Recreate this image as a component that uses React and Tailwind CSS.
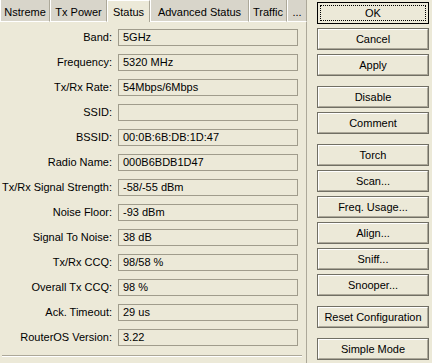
const tabs = [
  { name: 'Nstreme', w: 'w-[50px]' },
  { name: 'Tx Power', w: 'w-[57px]' },
  { name: 'Status', w: 'w-[43px]', active: true },
  { name: 'Advanced Status', w: 'w-[99px]' },
  { name: 'Traffic', w: 'w-[38px]' },
  { name: '...', w: 'w-[20px]' },
]

const rows = [
  ['Band:', '5GHz'],
  ['Frequency:', '5320 MHz'],
  ['Tx/Rx Rate:', '54Mbps/6Mbps'],
  ['SSID:', ''],
  ['BSSID:', '00:0B:6B:DB:1D:47'],
  ['Radio Name:', '000B6BDB1D47'],
  ['Tx/Rx Signal Strength:', '-58/-55 dBm'],
  ['Noise Floor:', '-93 dBm'],
  ['Signal To Noise:', '38 dB'],
  ['Tx/Rx CCQ:', '98/58 %'],
  ['Overall Tx CCQ:', '98 %'],
  ['Ack. Timeout:', '29 us'],
  ['RouterOS Version:', '3.22'],
]

const groups = [
  ['OK', 'Cancel', 'Apply'],
  ['Disable', 'Comment'],
  ['Torch', 'Scan...', 'Freq. Usage...', 'Align...', 'Sniff...', 'Snooper...'],
  ['Reset Configuration'],
  ['Simple Mode'],
]

function Button({ label, focused }) {
  if (focused) {
    return (
      <div className="h-[22px] w-[112px] border border-black bg-[#ece9d8] p-[2px]">
        <div className="flex h-full w-full items-center justify-center border border-dotted border-black text-black">
          {label}
        </div>
      </div>
    )
  }
  return (
    <div className="h-[22px] w-[112px] border border-[#716f64] bg-[#ece9d8]">
      <div className="flex h-full w-full items-center justify-center border-l border-t border-l-white border-t-white border-r border-b border-r-[#aca899] border-b-[#aca899] text-black">
        {label}
      </div>
    </div>
  )
}

export default function App() {
  return (
    <div
      className="flex h-[363px] w-[432px] bg-[#ece9d8] text-[11px] text-black overflow-hidden"
      style={{ fontFamily: '"Liberation Sans", Arial, sans-serif' }}
    >
      <div className="flex w-[307px] flex-col">
        <div className="flex h-[22px] items-end bg-[#ece9d8]">
          {tabs.map((t) =>
            t.active ? (
              <div
                key={t.name}
                className={`${t.w} flex h-[22px] items-start justify-center border-l border-t border-l-white border-t-white border-r border-r-[#aca899] bg-[#ece9d8] pt-[3px]`}
              >
                {t.name}
              </div>
            ) : (
              <div
                key={t.name}
                className={`${t.w} flex h-[22px] items-center justify-center border-l border-l-white border-r border-r-[#aca899] border-b border-b-white bg-[#d8d5ca] pt-[3px]`}
              >
                {t.name}
              </div>
            )
          )}
        </div>
        <div className="flex flex-1 flex-col border-r border-r-[#aca899] pt-[7px]">
          <div className="flex flex-col gap-[8px]">
            {rows.map(([label, value]) => (
              <div key={label} className="flex h-[17px] items-center">
                <div className="w-[113px] pr-[1px] text-right">{label}</div>
                <div className="ml-[5px] flex h-[17px] w-[180px] items-center border border-[#a09c8c] px-[4px]">
                  {value}
                </div>
              </div>
            ))}
          </div>
          <div className="mt-auto mb-[6px] ml-[2px] mr-[4px] h-[2px] border-t border-t-[#aca899] border-b border-b-white"></div>
        </div>
      </div>
      <div className="flex flex-col gap-[10px] pl-[10px] pt-[2px]">
        {groups.map((g, gi) => (
          <div key={gi} className="flex flex-col gap-[4px]">
            {g.map((b) => (
              <Button key={b} label={b} focused={b === 'OK'} />
            ))}
          </div>
        ))}
      </div>
    </div>
  )
}
